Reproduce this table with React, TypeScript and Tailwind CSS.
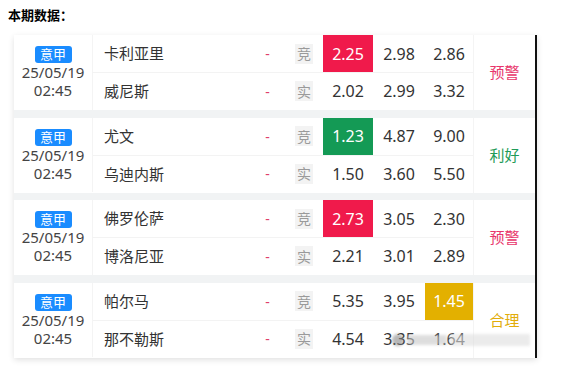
type Hl = "red" | "green" | "yellow" | null;

type Match = {
  home: string;
  away: string;
  jc: [string, string, string];
  real: [string, string, string];
  hlIdx: number;
  hl: Hl;
  status: string;
  statusColor: string;
};

const matches: Match[] = [
  {
    home: "卡利亚里",
    away: "威尼斯",
    jc: ["2.25", "2.98", "2.86"],
    real: ["2.02", "2.99", "3.32"],
    hlIdx: 0,
    hl: "red",
    status: "预警",
    statusColor: "text-[#e8356b]",
  },
  {
    home: "尤文",
    away: "乌迪内斯",
    jc: ["1.23", "4.87", "9.00"],
    real: ["1.50", "3.60", "5.50"],
    hlIdx: 0,
    hl: "green",
    status: "利好",
    statusColor: "text-[#1f9b58]",
  },
  {
    home: "佛罗伦萨",
    away: "博洛尼亚",
    jc: ["2.73", "3.05", "2.30"],
    real: ["2.21", "3.01", "2.89"],
    hlIdx: 0,
    hl: "red",
    status: "预警",
    statusColor: "text-[#e8356b]",
  },
  {
    home: "帕尔马",
    away: "那不勒斯",
    jc: ["5.35", "3.95", "1.45"],
    real: ["4.54", "3.35", "1.64"],
    hlIdx: 2,
    hl: "yellow",
    status: "合理",
    statusColor: "text-[#e2ad0a]",
  },
];

const oddsWidths = ["w-[50px]", "w-[52px]", "w-[48px]"];

function hlClass(h: Hl) {
  if (h === "red") return "bg-[#f01a4b] text-white";
  if (h === "green") return "bg-[#149a55] text-white";
  if (h === "yellow") return "bg-[#e3b000] text-white";
  return "text-[#333]";
}

function Row({ team, kind, odds, hlIdx, hl }: { team: string; kind: string; odds: string[]; hlIdx: number; hl: Hl }) {
  return (
    <div className="flex h-[37.5px] items-stretch">
      <div className="flex w-[158px] items-center border-l border-[#f4f4f4] pl-[11px] text-[15px] text-[#333]">{team}</div>
      <div className="flex w-[35px] items-center justify-center text-[14px] text-[#e0406a]">-</div>
      <div className="flex w-[38px] items-center justify-center">
        <span className="flex h-[20px] w-[18px] items-center justify-center bg-[#f3f3f3] text-[14px] text-[#9a9a9a]">{kind}</span>
      </div>
      {odds.map((o, i) => (
        <div
          key={i}
          className={`flex ${oddsWidths[i]} items-center justify-center text-[16px] ${i === hlIdx && hl ? hlClass(hl) : "text-[#333]"}`}
        >
          {o}
        </div>
      ))}
    </div>
  );
}

export default function App() {
  return (
    <div className="relative h-[372px] w-[566px] bg-white font-['Noto_Sans','Noto_Sans_CJK_SC',sans-serif]">
      <div className="pl-[8px] pt-[6px] text-[13px] font-bold leading-[18px] text-black">本期数据：</div>
      <div className="ml-[14px] mt-[11px] flex w-[523px] flex-col gap-[7.5px] border-r-2 border-[#111] bg-[#f1f3f4] shadow-[0_2px_6px_rgba(0,0,0,0.12)]">
        {matches.map((m) => (
          <div key={m.home} className="flex h-[75px] bg-white">
            <div className="flex w-[78px] flex-col items-center pt-[11px] text-[#444]">
              <span className="flex h-[17px] w-[37px] items-center justify-center rounded-[3px] bg-[#1a8cff] text-[13px] leading-none text-white">意甲</span>
              <p className="text-center text-[15px] leading-[18px]">
                25/05/19
                <br />
                02:45
              </p>
            </div>
            <div className="flex flex-col">
              <Row team={m.home} kind="竞" odds={m.jc} hlIdx={m.hlIdx} hl={m.hl} />
              <div className="h-px w-[381px] bg-[#f3f3f3]" />
              <Row team={m.away} kind="实" odds={m.real} hlIdx={-1} hl={null} />
            </div>
            <div className={`flex flex-1 items-center justify-center border-l border-[#f4f4f4] text-[15px] ${m.statusColor}`}>{m.status}</div>
          </div>
        ))}
      </div>
      <div className="absolute left-[392px] top-[334px] flex items-center gap-[3px] opacity-60 blur-[1.5px]">
        <span className="h-[12px] w-[12px] rounded-full bg-[#888]" />
        <span className="h-[10px] w-[40px] bg-[#c8c8c8]" />
        <span className="h-[12px] w-[80px] bg-[#dedede]" />
      </div>
    </div>
  );
}
